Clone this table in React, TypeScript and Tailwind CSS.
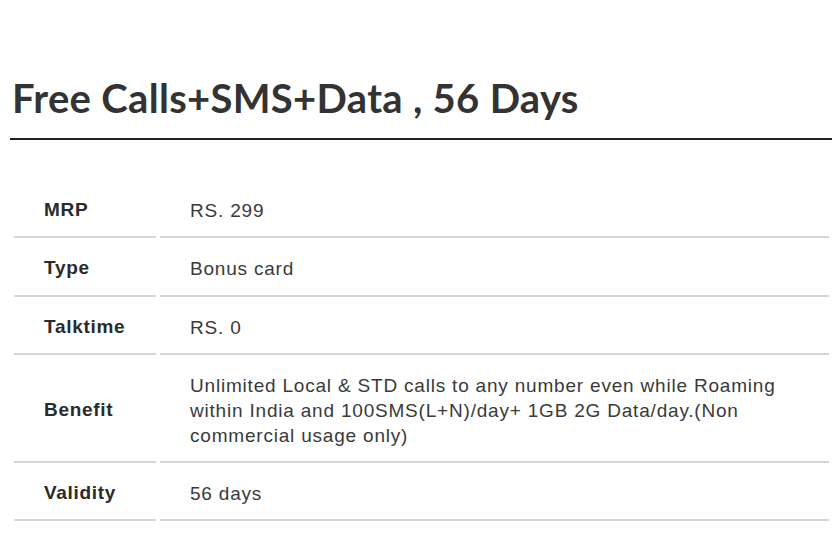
const ROWS = [
  { label: 'MRP', value: 'RS. 299', h: 'h-[58px]' },
  { label: 'Type', value: 'Bonus card', h: 'h-[59px]' },
  { label: 'Talktime', value: 'RS. 0', h: 'h-[58px]' },
  {
    label: 'Benefit',
    value:
      'Unlimited Local & STD calls to any number even while Roaming within India and 100SMS(L+N)/day+ 1GB 2G Data/day.(Non commercial usage only)',
    h: 'h-[108px]',
  },
  { label: 'Validity', value: '56 days', h: 'h-[58px]' },
]

export default function App() {
  return (
    <div className="w-[840px] h-[560px] bg-white overflow-hidden font-['Liberation_Sans',Arial,sans-serif]">
      <div className="pt-[74px] pl-[10px] pr-[8px]">
        <h1 className="pl-[2px] pb-[16px] border-b-2 border-[#222] text-[40px] leading-[48px] font-bold text-[#333] tracking-[0.3px] font-['Lato',sans-serif]">
          Free Calls+SMS+Data , 56 Days
        </h1>
      </div>

      {/* Plan table */}
      <div className="mt-[40px] pl-[14px] w-[829px]">
        {ROWS.map((r) => (
          <div key={r.label} className={`flex gap-[4px] ${r.h}`}>
            <div className="w-[142px] flex items-center pl-[30px] pt-[4px] border-b-2 border-[#d6d6d6] text-[19px] tracking-[0.7px] font-bold text-[#2b2b2b]">
              {r.label}
            </div>
            <div className="flex-1 flex items-center pl-[30px] pr-[39px] pt-[4px] border-b-2 border-[#d6d6d6] text-[19px] leading-[25px] tracking-[0.8px] text-[#3a3a3a]">
              {r.value}
            </div>
          </div>
        ))}
      </div>
    </div>
  )
}
